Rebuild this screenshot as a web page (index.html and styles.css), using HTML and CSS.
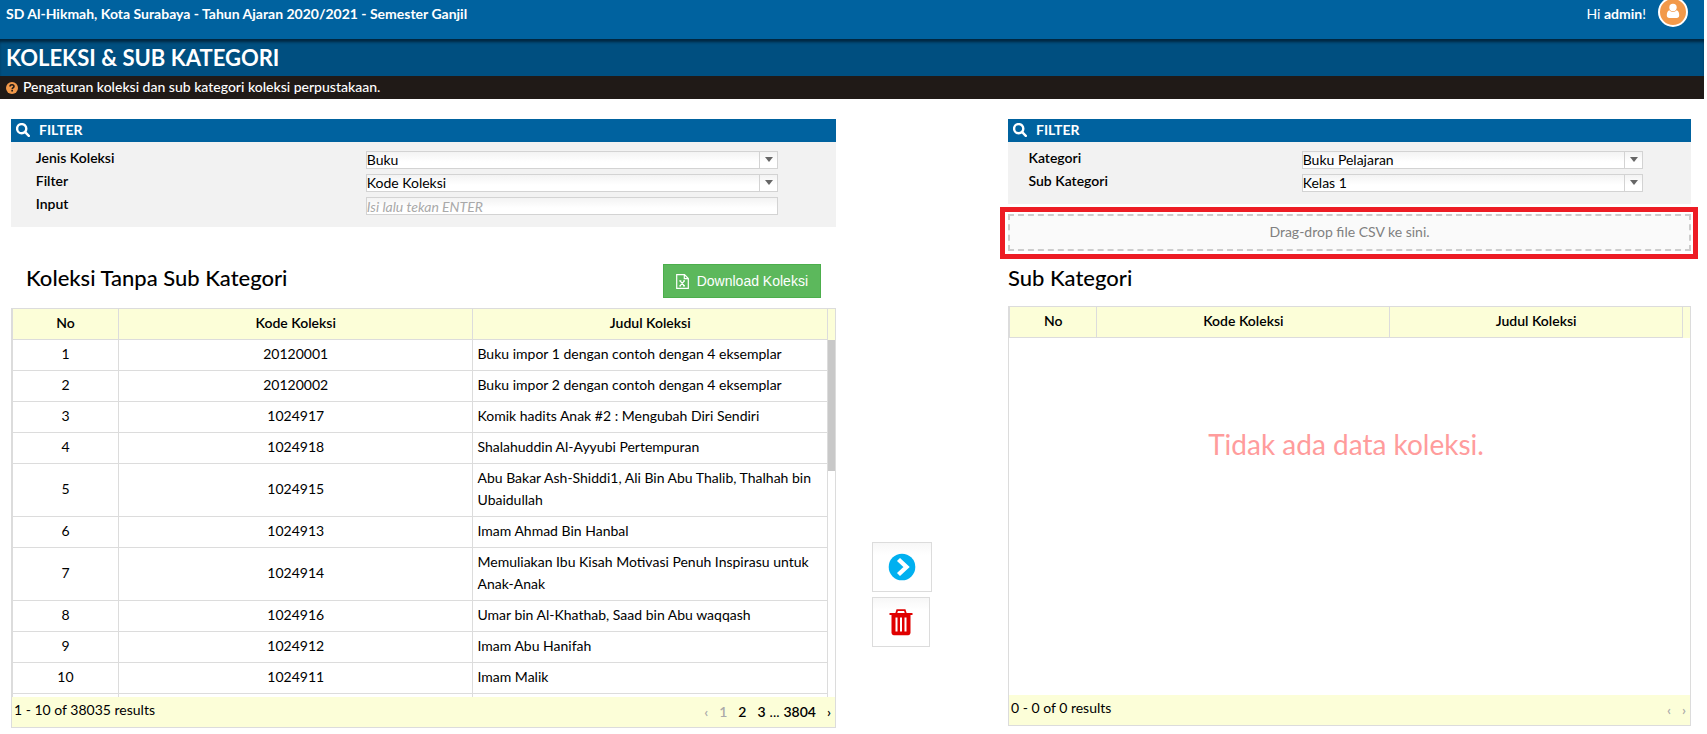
FILE: index.html
```html
<!DOCTYPE html>
<html lang="id">
<head>
<meta charset="utf-8">
<title>Koleksi &amp; Sub Kategori</title>
<link rel="stylesheet" href="styles.css">
</head>
<body>
<header class="topbar">
  <strong class="school">SD Al-Hikmah, Kota Surabaya - Tahun Ajaran 2020/2021 - Semester Ganjil</strong>
  <div class="user">
    <span>Hi <strong>admin</strong>!</span>
    <a class="avatar" href="#" aria-label="Profil">
      <svg viewBox="0 0 26 26" width="26" height="26"><circle cx="13" cy="8.500" r="3.700"/><path d="M9.300 11.300c-2 .6-2.500 2.800-2.500 5 0 1.700 1 2.700 2.500 2.700h7.400c1.500 0 2.500-1 2.500-2.700 0-2.200-.5-4.400-2.500-5a5 5 0 0 1-7.400 0z"/></svg>
    </a>
  </div>
</header>
<div class="titlebar"><h1>KOLEKSI &amp; SUB KATEGORI</h1></div>
<div class="notice">
  <svg viewBox="0 0 12 12" width="12" height="12"><circle cx="6" cy="6" r="6" fill="#f2994a"/><path d="M4 4.500C4.100 2.200 8 2.200 8 4.500 8 5.700 6.200 5.700 6.200 7.200" fill="none" stroke="#201a17" stroke-width="1.600"/><path d="M5.300 8h1.700v1.600H5.300z" fill="#201a17"/></svg>
  <span>Pengaturan koleksi dan sub kategori koleksi perpustakaan.</span>
</div>

<main class="workspace">
  <section class="panel">
    <div class="filter">
      <h2 class="filter-head"><svg viewBox="0 0 14 14" width="14" height="14"><circle cx="5.700" cy="5.700" r="4.600"/><path d="M9.200 9.200L12.800 12.800"/></svg>FILTER</h2>
      <div class="filter-body">
        <div class="field"><label for="jenis">Jenis Koleksi</label><span class="select"><select id="jenis"><option>Buku</option></select></span></div>
        <div class="field"><label for="filter">Filter</label><span class="select"><select id="filter"><option>Kode Koleksi</option></select></span></div>
        <div class="field"><label for="input">Input</label><input id="input" type="text" placeholder="Isi lalu tekan ENTER"></div>
      </div>
    </div>
    <div class="list-head list-head-source">
      <h2>Koleksi Tanpa Sub Kategori</h2>
      <button class="download" type="button"><svg viewBox="0 0 13 15" width="13" height="15"><path d="M.7.700h7.800l3.800 3.800v9.800H.7zM8.300.7v4h4M4 6.800l4.400 5M8.400 6.800L4 11.800M3.300 6.800h2M7.200 6.800h1.800M3.300 11.800h1.800M6.900 11.800H9"/></svg>Download Koleksi</button>
    </div>
    <div class="grid">
      <div class="grid-view">
        <table>
          <thead><tr><th class="col-no">No</th><th>Kode Koleksi</th><th>Judul Koleksi</th></tr></thead>
          <tbody>
            <tr><td>1</td><td>20120001</td><td>Buku impor 1 dengan contoh dengan 4 eksemplar</td></tr>
            <tr><td>2</td><td>20120002</td><td>Buku impor 2 dengan contoh dengan 4 eksemplar</td></tr>
            <tr><td>3</td><td>1024917</td><td>Komik hadits Anak #2 : Mengubah Diri Sendiri</td></tr>
            <tr><td>4</td><td>1024918</td><td>Shalahuddin Al-Ayyubi Pertempuran</td></tr>
            <tr><td>5</td><td>1024915</td><td>Abu Bakar Ash-Shiddi1, Ali Bin Abu Thalib, Thalhah bin Ubaidullah</td></tr>
            <tr><td>6</td><td>1024913</td><td>Imam Ahmad Bin Hanbal</td></tr>
            <tr><td>7</td><td>1024914</td><td>Memuliakan Ibu Kisah Motivasi Penuh Inspirasu untuk Anak-Anak</td></tr>
            <tr><td>8</td><td>1024916</td><td>Umar bin Al-Khathab, Saad bin Abu waqqash</td></tr>
            <tr><td>9</td><td>1024912</td><td>Imam Abu Hanifah</td></tr>
            <tr><td>10</td><td>1024911</td><td>Imam Malik</td></tr>
            <tr class="spacer"><td></td><td></td><td></td></tr>
          </tbody>
        </table>
        <div class="gutter"><div class="thumb"></div></div>
      </div>
      <div class="grid-foot">
        <span>1 - 10 of 38035 results</span>
        <nav class="pager" aria-label="Halaman"><a class="off" href="#">‹</a><a class="off" href="#">1</a><a href="#">2</a><a href="#">3</a><span class="dots">...</span><a href="#">3804</a><a href="#">›</a></nav>
      </div>
    </div>
  </section>

  <div class="actions">
    <button class="action" type="button" aria-label="Pindahkan"><svg viewBox="0 0 28 28" width="28" height="28"><circle cx="14" cy="14" r="13.300" fill="#00b0f0"/><path d="M10.500 6.500L18.500 14L10.500 21.500" fill="none" stroke="#fff" stroke-width="4.400"/></svg></button>
    <button class="action" type="button" aria-label="Hapus"><svg viewBox="0 0 26 28" width="26" height="28"><path d="M1.500 6h23" stroke="#e00000" stroke-width="2"/><path d="M8.200 5.500L9.200 2.200h7.600l1 3.300" fill="none" stroke="#e00000" stroke-width="1.800"/><path d="M3.500 6.500h19v18c0 1.600-1 2.700-2.400 2.700H5.900c-1.400 0-2.400-1.100-2.400-2.700z" fill="#e00000"/><path d="M8.500 9.500v14M13 9.500v14M17.500 9.500v14" stroke="#fff" stroke-width="2"/></svg></button>
  </div>

  <section class="panel">
    <div class="filter">
      <h2 class="filter-head"><svg viewBox="0 0 14 14" width="14" height="14"><circle cx="5.700" cy="5.700" r="4.600"/><path d="M9.200 9.200L12.800 12.800"/></svg>FILTER</h2>
      <div class="filter-body">
        <div class="field"><label for="kategori">Kategori</label><span class="select"><select id="kategori"><option>Buku Pelajaran</option></select></span></div>
        <div class="field"><label for="sub">Sub Kategori</label><span class="select"><select id="sub"><option>Kelas 1</option></select></span></div>
      </div>
    </div>
    <div class="highlight"><div class="dropzone">Drag-drop file CSV ke sini.</div></div>
    <div class="list-head list-head-target"><h2>Sub Kategori</h2></div>
    <div class="grid">
      <div class="grid-view">
        <div class="grid-main">
          <table>
            <thead><tr><th class="col-no">No</th><th>Kode Koleksi</th><th>Judul Koleksi</th></tr></thead>
          </table>
          <p class="empty">Tidak ada data koleksi.</p>
        </div>
        <div class="gutter"></div>
      </div>
      <div class="grid-foot">
        <span>0 - 0 of 0 results</span>
        <nav class="pager" aria-label="Halaman"><a class="off" href="#">‹</a><a class="off" href="#">›</a></nav>
      </div>
    </div>
  </section>
</main>
</body>
</html>
```
FILE: styles.css
```css
* { box-sizing: border-box; }
body {
  margin: 0;
  background: #fff;
  color: #000;
  font: 14px/22px Lato, "Liberation Sans", sans-serif;
}
h1, h2, p { margin: 0; }
button, input, select { font: inherit; }
a { color: inherit; text-decoration: none; }

.topbar, .titlebar, .notice { margin-right: 3px; color: #fff; }
.topbar {
  display: flex;
  justify-content: space-between;
  align-items: flex-start;
  height: 39px;
  padding: 3px 16px 0 6px;
  background: #00629f;
}
.user { display: flex; gap: 12px; }
.avatar {
  width: 30px;
  height: 30px;
  margin-top: -6px;
  border: 2px solid #fff;
  border-radius: 50%;
  background: #f2994a;
  fill: #fff;
}
.avatar svg { display: block; }
.titlebar {
  height: 37px;
  padding: 3px 6px 0;
  background: #004f80;
  box-shadow: inset 0 4px 3px -1px #00263f;
}
h1 { font-size: 22px; line-height: 32px; font-weight: 700; }
.notice {
  display: flex;
  align-items: center;
  gap: 5px;
  height: 23px;
  padding: 0 6px;
  background: #201a17;
  font-weight: 500;
  line-height: 20px;
}
.notice span { padding-bottom: 2px; }

.workspace {
  display: grid;
  grid-template-columns: 825fr 172px 683fr;
  align-items: start;
  padding: 20px 16px 0 11px;
}
.panel { min-width: 0; }
.filter { background: #f2f2f2; }
.filter-head {
  display: flex;
  align-items: center;
  gap: 9px;
  height: 23px;
  padding: 0 5px 2px;
  background: #00629f;
  color: #fff;
  font-size: 14px;
  line-height: 20px;
}
.filter-head svg { fill: none; stroke: #fff; stroke-width: 2.4; stroke-linecap: round; }
.filter-body {
  display: flex;
  flex-direction: column;
  gap: 5px;
  padding: 9px 7% 12px 3%;
}
.field { display: grid; grid-template-columns: 4fr 5fr; height: 18px; }
.field label { line-height: 14px; font-weight: 600; }
.select { position: relative; display: block; }
.field input, .field select {
  display: block;
  width: 100%;
  height: 18px;
  margin: 0;
  padding: 0;
  border: 1px solid #d3d3d3;
  border-radius: 0;
  background: linear-gradient(#f3f3f3, #fff 10px);
  color: #000;
  line-height: 16px;
  appearance: none;
}
.field input::placeholder { color: #a9a9a9; font-style: italic; }
.select::before {
  content: "";
  position: absolute;
  top: 0;
  right: 18px;
  height: 18px;
  border-left: 1px solid #d3d3d3;
}
.select::after {
  content: "";
  position: absolute;
  top: 6px;
  right: 5px;
  border: 4px solid transparent;
  border-top: 5px solid #666;
  border-bottom: 0;
}

.list-head {
  display: flex;
  justify-content: space-between;
  align-items: flex-start;
}
.list-head h2 { font-size: 22px; line-height: 28px; font-weight: 500; }
.list-head-source { padding: 37px 15px 10px; }
.list-head-target { padding: 5px 0 14px; }
.download {
  display: flex;
  align-items: center;
  gap: 8px;
  height: 34px;
  padding: 0 12px;
  border: 1px solid #4cae4c;
  background: #5cb85c;
  color: #fff;
  font: 14px/20px "Liberation Sans", Arial, sans-serif;
}
.download svg { fill: none; stroke: #fff; stroke-width: 1.2; }

.actions {
  display: flex;
  flex-direction: column;
  align-items: flex-start;
  gap: 5px;
  padding: 423px 0 0 36px;
}
.action {
  padding: 10px 15px;
  border: 1px solid #dcdcdc;
  background: linear-gradient(#f7f7f7, #fff 12px);
}
.action svg { display: block; }

.highlight {
  margin: 3px -7px 0 -8px;
  padding: 2px 2px 3px 3px;
  border: 5px solid #ed1c24;
}
.dropzone {
  height: 37px;
  border: 2px dashed #ccc;
  background: #fafafa;
  color: #808080;
  line-height: 32px;
  text-align: center;
}

.grid { border: 1px solid #dcdcdc; }
.grid-view { display: flex; height: 388px; overflow: hidden; }
.grid-main { flex: 1; }
table {
  flex: 1;
  width: 100%;
  table-layout: fixed;
  border-spacing: 0;
  border-left: 1px solid #dcdcdc;
}
th, td {
  height: 31px;
  padding: 3px 4px 5px;
  border: solid #dcdcdc;
  border-width: 0 1px 1px 0;
  text-align: center;
}
th { background: #fcfed8; font-weight: 600; }
td:last-child { text-align: left; }
.col-no { width: 13%; }
.gutter {
  width: 7px;
  padding-top: 31px;
  background: linear-gradient(#fcfed8 31px, #fff 31px);
}
.thumb { height: 131px; background: #c8c8c8; }
.empty {
  padding-top: 86px;
  color: #ff9c9c;
  font-size: 28px;
  line-height: 40px;
  text-align: center;
}
.grid-foot {
  display: flex;
  justify-content: space-between;
  height: 30px;
  padding: 2px 4px 0 2px;
  background: #fcfed8;
}
.pager { display: flex; gap: 11px; padding-top: 2px; font-weight: 600; }
.pager .off { color: #aaa; }
.dots { margin: 0 -7px; font-weight: 400; }
```
